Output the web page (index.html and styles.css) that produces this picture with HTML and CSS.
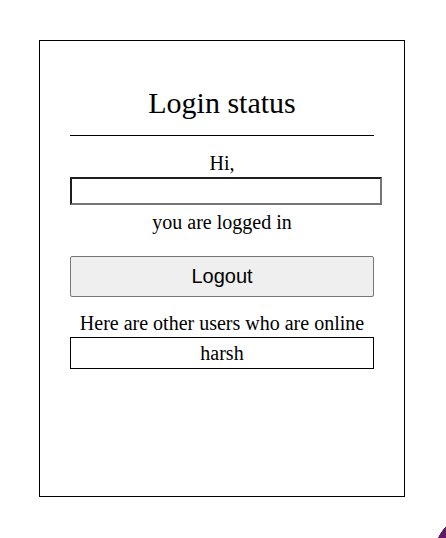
FILE: index.html
```html
<!DOCTYPE html>
<html>
<head>
<meta charset="utf-8">
<title>Login status</title>
<link rel="stylesheet" href="styles.css">
</head>
<body>
<div class="card">
  <h1 class="title">Login status</h1>
  <div class="rule"></div>
  <p class="hi">Hi,</p>
  <input class="name" type="text" value="">
  <p class="status">you are logged in</p>
  <button class="logout" type="button">Logout</button>
  <p class="others">Here are other users who are online</p>
  <div class="user">harsh</div>
</div>
<div class="fab"></div>
</body>
</html>
```
FILE: styles.css
```css
html, body {
  margin: 0;
  padding: 0;
  background: #ffffff;
}
body {
  font-family: "Liberation Serif", "Times New Roman", serif;
  color: #000;
  overflow: hidden;
  height: 538px;
}
.card {
  box-sizing: border-box;
  margin: 40px 0 0 39px;
  width: 366px;
  height: 457px;
  border: 1px solid #000;
  padding: 44px 30px 0 30px;
  display: flex;
  flex-direction: column;
  align-items: flex-start;
}
.title {
  margin: 0;
  width: 304px;
  font-size: 30px;
  font-weight: normal;
  line-height: 36px;
  text-align: center;
}
.rule {
  margin-top: 14px;
  width: 304px;
  height: 0;
  border-top: 1px solid #000;
}
.hi, .status, .others {
  margin: 0;
  width: 304px;
  font-size: 20px;
  line-height: 23px;
  text-align: center;
}
.hi {
  margin-top: 16px;
}
.name {
  box-sizing: border-box;
  margin: 2px 0 0 0;
  width: 312px;
  height: 28px;
  padding: 0;
  border-style: solid;
  border-width: 2px;
  border-color: #1e1e1e #767676 #767676 #1e1e1e;
  background: #fff;
  outline: none;
}
.status {
  margin-top: 6px;
}
.logout {
  box-sizing: border-box;
  margin: 22px 0 0 0;
  width: 304px;
  height: 41px;
  padding: 0;
  border: 1px solid #767676;
  border-radius: 2px;
  background: #efefef;
  color: #000;
  font-family: "Liberation Sans", Arial, sans-serif;
  font-size: 20px;
}
.others {
  margin-top: 15px;
}
.user {
  box-sizing: border-box;
  margin-top: 2px;
  width: 304px;
  height: 32px;
  border: 1px solid #000;
  padding-top: 4px;
  font-size: 20px;
  line-height: 23px;
  text-align: center;
}
.fab {
  position: absolute;
  left: 434px;
  top: 514px;
  width: 12px;
  height: 24px;
  background: radial-gradient(circle 41px at 41px 41px, #5e1a66 40.5px, rgba(94, 26, 102, 0) 41px);
}
```
